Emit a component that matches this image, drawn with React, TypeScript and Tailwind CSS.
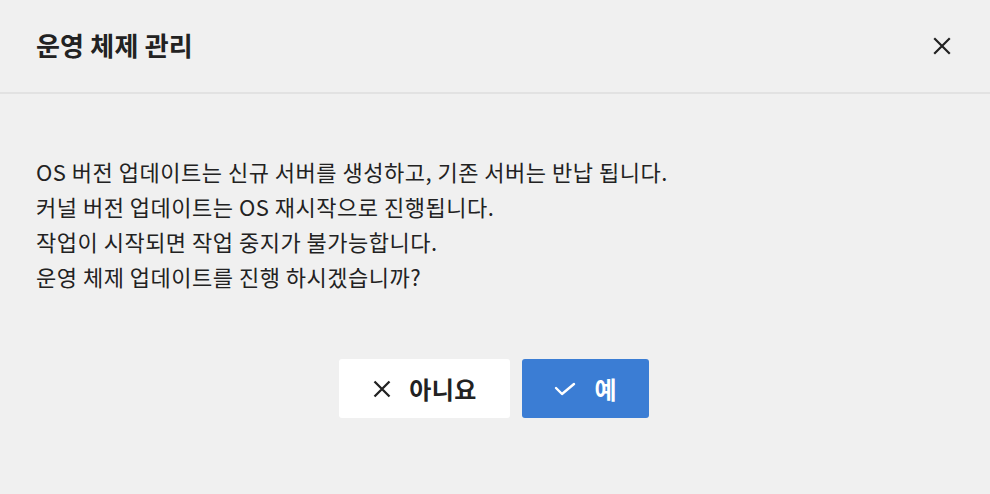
import React from 'react';

const font = { fontFamily: '"Noto Sans CJK KR", "Noto Sans", sans-serif' };

export default function App() {
  return (
    <div className="w-[990px] h-[494px] bg-[#f0f0f0] text-[#222] flex flex-col" style={font}>
      {/* Header */}
      <div className="h-[94px] border-b-2 border-[#e2e2e2] flex items-center justify-between pl-[36px] pr-[38px] pb-[4px] shrink-0">
        <h1 className="text-[26px] font-bold tracking-[0.2px] text-[#222]">운영 체제 관리</h1>
        <button className="text-[#222] mt-[3px]">
          <svg width="20" height="20" viewBox="0 0 20 20" fill="none" stroke="currentColor" strokeWidth="2.2" strokeLinecap="square">
            <path d="M3 3 L17 17 M17 3 L3 17" />
          </svg>
        </button>
      </div>

      {/* Body */}
      <div className="px-[36px] pt-[60px] text-[22px] leading-[35px] tracking-[0.5px] text-[#222]">
        <p>OS 버전 업데이트는 신규 서버를 생성하고, 기존 서버는 반납 됩니다.</p>
        <p>커널 버전 업데이트는 OS 재시작으로 진행됩니다.</p>
        <p>작업이 시작되면 작업 중지가 불가능합니다.</p>
        <p>운영 체제 업데이트를 진행 하시겠습니까?</p>
      </div>

      {/* Actions */}
      <div className="flex justify-center gap-[12px] mt-[65px] pr-[2px]">
        <button className="w-[171px] h-[59px] bg-white rounded-[3px] flex items-center justify-center gap-[17px] text-[24px] font-bold tracking-[0.5px] text-[#222]">
          <svg width="20" height="20" viewBox="0 0 20 20" fill="none" stroke="currentColor" strokeWidth="2.3">
            <path d="M2.5 2.5 L17.5 17.5 M17.5 2.5 L2.5 17.5" />
          </svg>
          <span>아니요</span>
        </button>
        <button className="w-[127px] h-[59px] bg-[#3b7dd4] rounded-[3px] flex items-center justify-center gap-[18px] text-[24px] font-bold text-white">
          <svg width="22" height="14" viewBox="0 0 22 14" fill="none" stroke="currentColor" strokeWidth="2.4" strokeLinecap="round" strokeLinejoin="round">
            <path d="M2 6 L8 12 L20 2" />
          </svg>
          <span>예</span>
        </button>
      </div>
    </div>
  );
}
